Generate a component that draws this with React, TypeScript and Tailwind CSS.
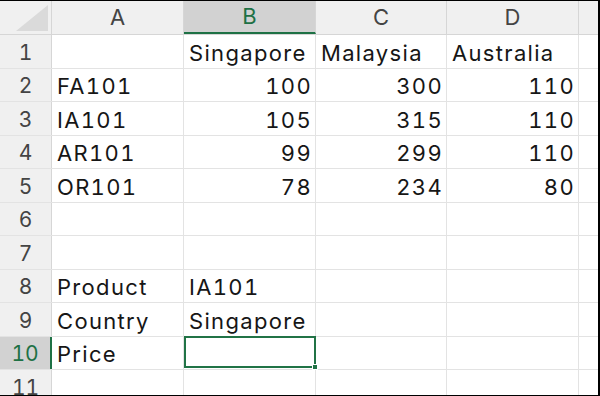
import React from "react";

const cols = ["A", "B", "C", "D"];

type Cell = { v: string; right?: boolean };

const rows: Cell[][] = [
  [{ v: "" }, { v: "Singapore" }, { v: "Malaysia" }, { v: "Australia" }],
  [{ v: "FA101" }, { v: "100", right: true }, { v: "300", right: true }, { v: "110", right: true }],
  [{ v: "IA101" }, { v: "105", right: true }, { v: "315", right: true }, { v: "110", right: true }],
  [{ v: "AR101" }, { v: "99", right: true }, { v: "299", right: true }, { v: "110", right: true }],
  [{ v: "OR101" }, { v: "78", right: true }, { v: "234", right: true }, { v: "80", right: true }],
  [{ v: "" }, { v: "" }, { v: "" }, { v: "" }],
  [{ v: "" }, { v: "" }, { v: "" }, { v: "" }],
  [{ v: "Product" }, { v: "IA101" }, { v: "" }, { v: "" }],
  [{ v: "Country" }, { v: "Singapore" }, { v: "" }, { v: "" }],
  [{ v: "Price" }, { v: "" }, { v: "" }, { v: "" }],
  [{ v: "" }, { v: "" }, { v: "" }, { v: "" }],
];

const widths = ["w-[132px]", "w-[132px]", "w-[131px]", "w-[132px]"];

export default function App() {
  return (
    <div
      className="w-[600px] h-[396px] overflow-hidden bg-white border-t border-b border-r-2 border-black text-[#161616]"
      style={{ fontFamily: "Inter, 'Noto Sans', sans-serif" }}
    >
      {/* Column headers */}
      <div className="flex h-[34px] bg-[#f0f0f0] border-b border-[#d6d6d6]">
        <div className="w-[52px] shrink-0 h-full border-r border-[#d6d6d6] relative">
          <svg className="absolute right-[3px] bottom-[3px]" width="32" height="26" viewBox="0 0 32 26">
            <polygon points="32,0 32,26 0,26" fill="#dadada" />
          </svg>
        </div>
        {cols.map((c, i) => (
          <div
            key={c}
            className={`${widths[i]} shrink-0 h-full flex items-center justify-center text-[22px] border-r border-[#d6d6d6] ${
              c === "B" ? "bg-[#d2d2d2] text-[#1e7145] border-b-2 border-b-[#1e7145]" : "text-[#444]"
            }`}
          >
            {c}
          </div>
        ))}
        <div className="flex-1" />
      </div>

      {rows.map((r, ri) => {
        const n = ri + 1;
        const sel = n === 10;
        return (
          <div key={n} className="flex h-[33.5px] border-b border-[#e3e3e3]">
            <div
              className={`w-[52px] shrink-0 h-full flex items-center justify-center text-[21px] pt-[2px] tabular-nums ${
                sel
                  ? "bg-[#d2d2d2] text-[#1e7145] border-r-2 border-[#1e7145]"
                  : "bg-[#f0f0f0] text-[#444] border-r border-[#d6d6d6]"
              }`}
            >
              {n}
            </div>
            {r.map((cell, ci) => {
              const active = sel && ci === 1;
              return (
                <div
                  key={ci}
                  className={`${widths[ci]} shrink-0 h-full flex items-center text-[22px] tracking-[0.06em] tabular-nums pt-[4px] whitespace-nowrap relative ${
                    cell.right ? "justify-end pr-[3px] pl-[5px]" : "justify-start px-[5px]"
                  } ${active ? "border-2 border-[#217346] -mt-[1px] h-[35px]" : "border-r border-[#e3e3e3]"}`}
                >
                  {cell.v}
                  {active && (
                    <span className="absolute -right-[4px] -bottom-[4px] w-[6px] h-[6px] bg-[#217346] border border-white" />
                  )}
                </div>
              );
            })}
            <div className="flex-1" />
          </div>
        );
      })}
    </div>
  );
}
